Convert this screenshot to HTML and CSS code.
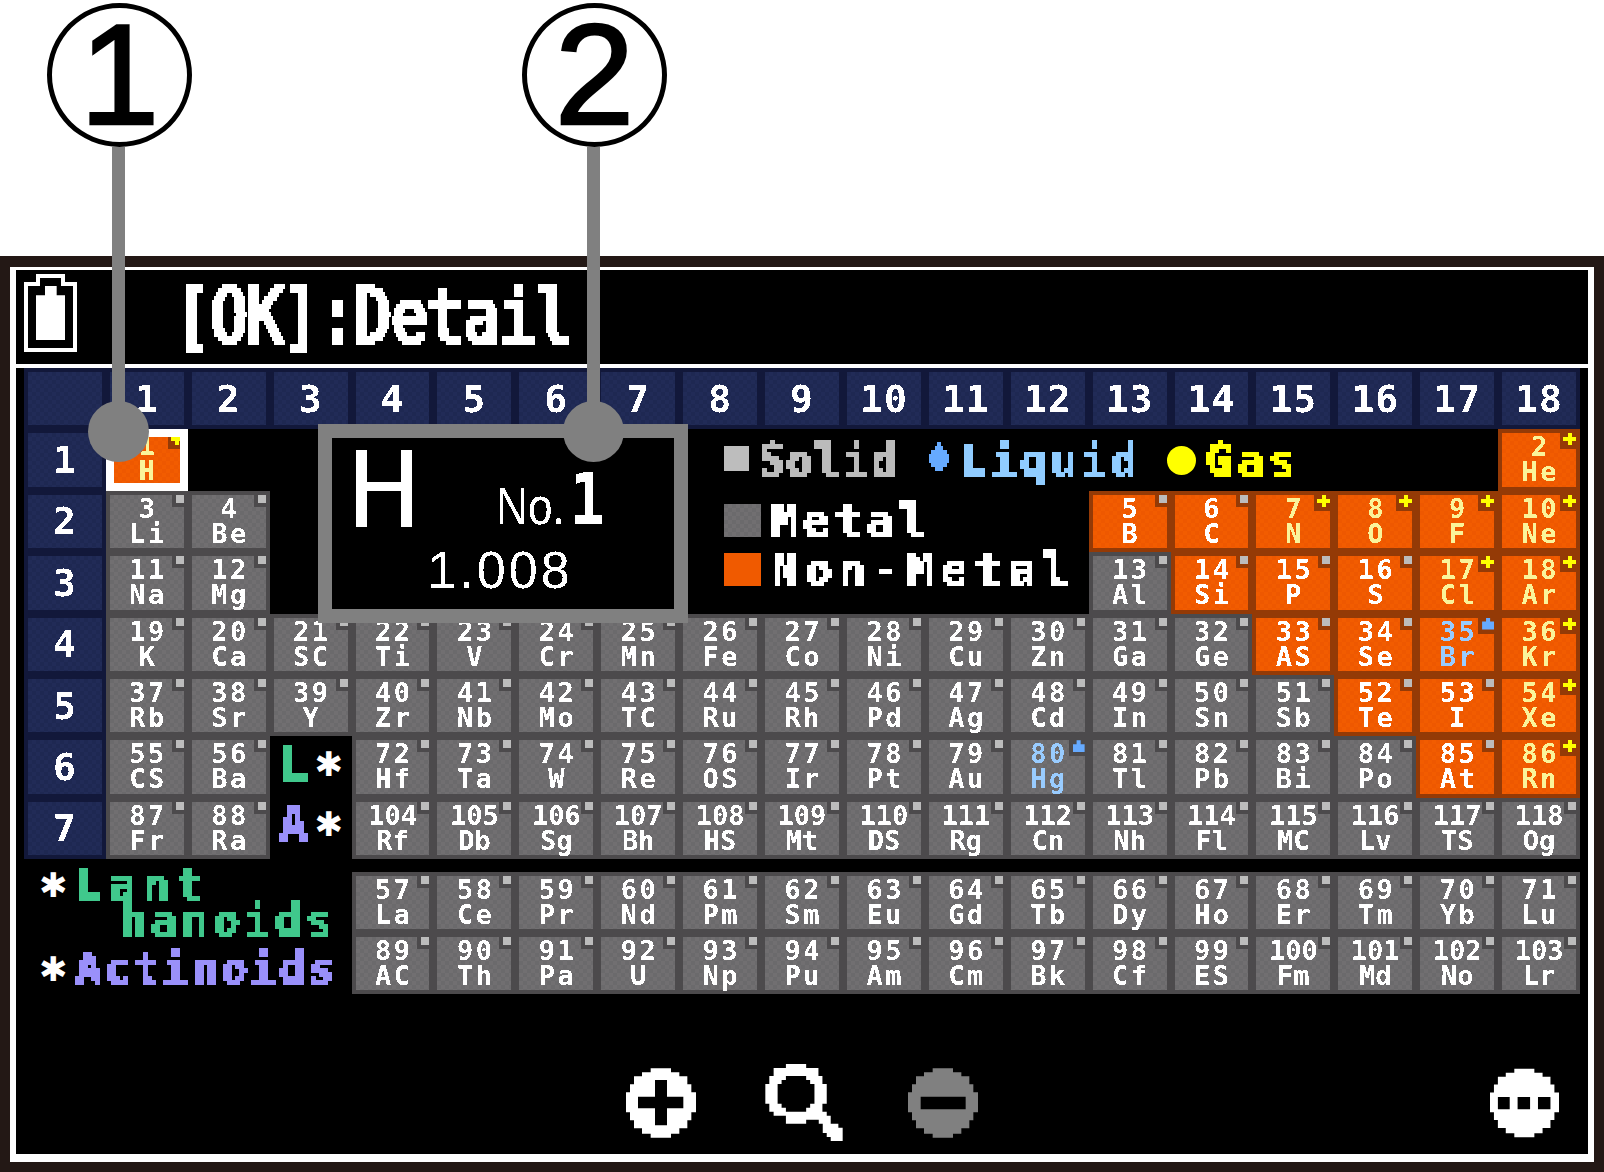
FILE: index.html
```html
<!DOCTYPE html>
<html lang="en">
<head>
<meta charset="utf-8">
<title>Periodic table</title>
<link rel="stylesheet" href="styles.css">
</head>
<body>
<svg class="defs" width="0" height="0" aria-hidden="true"><defs>
  <filter id="px" x="-10%" y="-30%" width="120%" height="160%" color-interpolation-filters="sRGB">
    <feFlood x="2" y="2" width="1" height="1" flood-color="#000"/>
    <feComposite width="4" height="4"/>
    <feTile result="grid"/>
    <feComposite in="SourceGraphic" in2="grid" operator="in"/>
    <feMorphology operator="dilate" radius="2"/>
    <feComponentTransfer><feFuncA type="discrete" tableValues="0 1 1 1"/></feComponentTransfer>
  </filter>
  <filter id="crisp" x="-10%" y="-30%" width="120%" height="160%" color-interpolation-filters="sRGB">
    <feComponentTransfer><feFuncA type="discrete" tableValues="0 1"/></feComponentTransfer>
  </filter>
</defs></svg>
<div class="callouts">
  <div class="callout one"><div class="bubble">1</div><div class="stem"></div><div class="dot"></div></div>
  <div class="callout two"><div class="bubble">2</div><div class="stem"></div><div class="dot"></div></div>
</div>
<div class="device">
<div class="screen">
  <header class="bar">
    <svg class="battery" viewBox="12 6 159 234"><path fill="#fff" fill-rule="evenodd" d="M48 6h87v24h36v210H12V30h36zM60 18v24H24v186h135V42h-36V18z"/><path fill="#fff" d="M75 42h35v28h25v134H48V70h27z"/></svg>
    <div class="prompt">[OK]:Detail</div>
  </header>
  <main class="table">
    <div class="hd"></div><div class="hd"><span>1</span></div><div class="hd"><span>2</span></div><div class="hd"><span>3</span></div><div class="hd"><span>4</span></div><div class="hd"><span>5</span></div><div class="hd"><span>6</span></div><div class="hd"><span>7</span></div><div class="hd"><span>8</span></div><div class="hd"><span>9</span></div><div class="hd"><span>10</span></div><div class="hd"><span>11</span></div><div class="hd"><span>12</span></div><div class="hd"><span>13</span></div><div class="hd"><span>14</span></div><div class="hd"><span>15</span></div><div class="hd"><span>16</span></div><div class="hd"><span>17</span></div><div class="hd"><span>18</span></div>

    <div class="key state">
      <span class="sq solid"></span><span class="lbl solid-t">Solid</span>
      <svg class="drop" viewBox="0 0 20 29"><path fill="#66aaff" d="M8 0h4v4h2v4h4v4h2v9h-2v4h-4v4H6v-4H2v-4H0v-9h2V8h4V4h2z"/></svg><span class="lbl liquid-t">Liquid</span>
      <span class="ball"></span><span class="lbl gas-t">Gas</span>
    </div>
    <div class="key kinds">
      <div class="kind"><span class="sw metal"></span><span class="lbl wide">Metal</span></div>
      <div class="kind"><span class="sw non"></span><span class="lbl wider">Non-Metal</span></div>
    </div>

    <div class="hd"><span>1</span></div><div class="el n g sel"><i></i><b>1</b><b>H</b></div><div class="el n g c19"><i></i><b>2</b><b>He</b></div>
    <div class="hd"><span>2</span></div><div class="el m"><i></i><b>3</b><b>Li</b></div><div class="el m"><i></i><b>4</b><b>Be</b></div><div class="el n c14"><i></i><b>5</b><b>B</b></div><div class="el n"><i></i><b>6</b><b>C</b></div><div class="el n g"><i></i><b>7</b><b>N</b></div><div class="el n g"><i></i><b>8</b><b>O</b></div><div class="el n g"><i></i><b>9</b><b>F</b></div><div class="el n g"><i></i><b>10</b><b>Ne</b></div>
    <div class="hd"><span>3</span></div><div class="el m"><i></i><b>11</b><b>Na</b></div><div class="el m"><i></i><b>12</b><b>Mg</b></div><div class="el m c14"><i></i><b>13</b><b>Al</b></div><div class="el n"><i></i><b>14</b><b>Si</b></div><div class="el n"><i></i><b>15</b><b>P</b></div><div class="el n"><i></i><b>16</b><b>S</b></div><div class="el n g"><i></i><b>17</b><b>Cl</b></div><div class="el n g"><i></i><b>18</b><b>Ar</b></div>
    <div class="hd"><span>4</span></div><div class="el m"><i></i><b>19</b><b>K</b></div><div class="el m"><i></i><b>20</b><b>Ca</b></div><div class="el m"><i></i><b>21</b><b>SC</b></div><div class="el m"><i></i><b>22</b><b>Ti</b></div><div class="el m"><i></i><b>23</b><b>V</b></div><div class="el m"><i></i><b>24</b><b>Cr</b></div><div class="el m"><i></i><b>25</b><b>Mn</b></div><div class="el m"><i></i><b>26</b><b>Fe</b></div><div class="el m"><i></i><b>27</b><b>Co</b></div><div class="el m"><i></i><b>28</b><b>Ni</b></div><div class="el m"><i></i><b>29</b><b>Cu</b></div><div class="el m"><i></i><b>30</b><b>Zn</b></div><div class="el m"><i></i><b>31</b><b>Ga</b></div><div class="el m"><i></i><b>32</b><b>Ge</b></div><div class="el n"><i></i><b>33</b><b>AS</b></div><div class="el n"><i></i><b>34</b><b>Se</b></div><div class="el n l"><i></i><b>35</b><b>Br</b></div><div class="el n g"><i></i><b>36</b><b>Kr</b></div>
    <div class="hd"><span>5</span></div><div class="el m"><i></i><b>37</b><b>Rb</b></div><div class="el m"><i></i><b>38</b><b>Sr</b></div><div class="el m"><i></i><b>39</b><b>Y</b></div><div class="el m"><i></i><b>40</b><b>Zr</b></div><div class="el m"><i></i><b>41</b><b>Nb</b></div><div class="el m"><i></i><b>42</b><b>Mo</b></div><div class="el m"><i></i><b>43</b><b>TC</b></div><div class="el m"><i></i><b>44</b><b>Ru</b></div><div class="el m"><i></i><b>45</b><b>Rh</b></div><div class="el m"><i></i><b>46</b><b>Pd</b></div><div class="el m"><i></i><b>47</b><b>Ag</b></div><div class="el m"><i></i><b>48</b><b>Cd</b></div><div class="el m"><i></i><b>49</b><b>In</b></div><div class="el m"><i></i><b>50</b><b>Sn</b></div><div class="el m"><i></i><b>51</b><b>Sb</b></div><div class="el n"><i></i><b>52</b><b>Te</b></div><div class="el n"><i></i><b>53</b><b>I</b></div><div class="el n g"><i></i><b>54</b><b>Xe</b></div>
    <div class="hd"><span>6</span></div><div class="el m"><i></i><b>55</b><b>CS</b></div><div class="el m"><i></i><b>56</b><b>Ba</b></div>
    <div class="series"><div class="ser"><span class="big lan">L</span><span class="star">✱</span></div><div class="ser"><span class="big act">A</span><span class="star">✱</span></div></div>
    <div class="el m"><i></i><b>72</b><b>Hf</b></div><div class="el m"><i></i><b>73</b><b>Ta</b></div><div class="el m"><i></i><b>74</b><b>W</b></div><div class="el m"><i></i><b>75</b><b>Re</b></div><div class="el m"><i></i><b>76</b><b>OS</b></div><div class="el m"><i></i><b>77</b><b>Ir</b></div><div class="el m"><i></i><b>78</b><b>Pt</b></div><div class="el m"><i></i><b>79</b><b>Au</b></div><div class="el m l"><i></i><b>80</b><b>Hg</b></div><div class="el m"><i></i><b>81</b><b>Tl</b></div><div class="el m"><i></i><b>82</b><b>Pb</b></div><div class="el m"><i></i><b>83</b><b>Bi</b></div><div class="el m"><i></i><b>84</b><b>Po</b></div><div class="el n"><i></i><b>85</b><b>At</b></div><div class="el n g"><i></i><b>86</b><b>Rn</b></div>
    <div class="hd"><span>7</span></div><div class="el m"><i></i><b>87</b><b>Fr</b></div><div class="el m"><i></i><b>88</b><b>Ra</b></div><div class="el m t c5"><i></i><b>104</b><b>Rf</b></div><div class="el m t"><i></i><b>105</b><b>Db</b></div><div class="el m t"><i></i><b>106</b><b>Sg</b></div><div class="el m t"><i></i><b>107</b><b>Bh</b></div><div class="el m t"><i></i><b>108</b><b>HS</b></div><div class="el m t"><i></i><b>109</b><b>Mt</b></div><div class="el m t"><i></i><b>110</b><b>DS</b></div><div class="el m t"><i></i><b>111</b><b>Rg</b></div><div class="el m t"><i></i><b>112</b><b>Cn</b></div><div class="el m t"><i></i><b>113</b><b>Nh</b></div><div class="el m t"><i></i><b>114</b><b>Fl</b></div><div class="el m t"><i></i><b>115</b><b>MC</b></div><div class="el m t"><i></i><b>116</b><b>Lv</b></div><div class="el m t"><i></i><b>117</b><b>TS</b></div><div class="el m t"><i></i><b>118</b><b>Og</b></div>

    <section class="detail">
      <div class="d-top"><span class="d-sym">H</span><span class="d-no">No.</span><span class="d-num">1</span></div>
      <div class="d-mass">1.008</div>
    </section>
  </main>
  <section class="table lower">
    <div class="names">
      <span class="star">✱</span><span class="lbl lan sp-a">Lant</span>
      <span></span><span class="lbl lan right sp-b">hanoids</span>
      <span class="star gap">✱</span><span class="lbl act gap sp-c">Actinoids</span>
    </div>
    <div class="el m"><i></i><b>57</b><b>La</b></div><div class="el m"><i></i><b>58</b><b>Ce</b></div><div class="el m"><i></i><b>59</b><b>Pr</b></div><div class="el m"><i></i><b>60</b><b>Nd</b></div><div class="el m"><i></i><b>61</b><b>Pm</b></div><div class="el m"><i></i><b>62</b><b>Sm</b></div><div class="el m"><i></i><b>63</b><b>Eu</b></div><div class="el m"><i></i><b>64</b><b>Gd</b></div><div class="el m"><i></i><b>65</b><b>Tb</b></div><div class="el m"><i></i><b>66</b><b>Dy</b></div><div class="el m"><i></i><b>67</b><b>Ho</b></div><div class="el m"><i></i><b>68</b><b>Er</b></div><div class="el m"><i></i><b>69</b><b>Tm</b></div><div class="el m"><i></i><b>70</b><b>Yb</b></div><div class="el m"><i></i><b>71</b><b>Lu</b></div>
    <div class="el m"><i></i><b>89</b><b>AC</b></div><div class="el m"><i></i><b>90</b><b>Th</b></div><div class="el m"><i></i><b>91</b><b>Pa</b></div><div class="el m"><i></i><b>92</b><b>U</b></div><div class="el m"><i></i><b>93</b><b>Np</b></div><div class="el m"><i></i><b>94</b><b>Pu</b></div><div class="el m"><i></i><b>95</b><b>Am</b></div><div class="el m"><i></i><b>96</b><b>Cm</b></div><div class="el m"><i></i><b>97</b><b>Bk</b></div><div class="el m"><i></i><b>98</b><b>Cf</b></div><div class="el m"><i></i><b>99</b><b>ES</b></div><div class="el m t"><i></i><b>100</b><b>Fm</b></div><div class="el m t"><i></i><b>101</b><b>Md</b></div><div class="el m t"><i></i><b>102</b><b>No</b></div><div class="el m t"><i></i><b>103</b><b>Lr</b></div>
  </section>
  <footer class="tools">
    <svg class="ic plus" viewBox="18 40 210 208"><path fill="#fff" fill-rule="evenodd" d="M92 40h61v12h25v12h24v24h12v24h14v60h-14v24h-12v24h-24v16h-25v12H92v-12H66v-16H42v-24H30v-24H18v-60h12V88h12V64h24V52h26zM105 75v50H54v35h51v51h36v-51h49v-35h-49V75z"/></svg>
    <svg class="ic mag" viewBox="435 28 233 232"><path fill="#fff" fill-rule="evenodd" d="M497 28H558V40H595V64H607V88H620V148H607V172H620V184H632V208H655V220H668V260H632V248H620V236H608V208H596V196H558V208H497V184H460V172H447V148H435V88H447V64H460V40H497ZM497 64V76H484V88H472V148H484V160H497V172H558V160H570V148H583V88H570V76H558V64Z"/></svg>
    <svg class="ic minus" viewBox="18 40 210 208"><path fill="#808080" fill-rule="evenodd" d="M92 40h61v12h25v12h24v24h12v24h14v60h-14v24h-12v24h-24v16h-25v12H92v-12H66v-16H42v-24H30v-24H18v-60h12V88h12V64h24V52h26zM56 125v38h135v-38z"/></svg>
    <svg class="ic more" viewBox="18 40 210 208"><path fill="#fff" fill-rule="evenodd" d="M92 40h61v12h25v12h24v24h12v24h14v60h-14v24h-12v24h-24v16h-25v12H92v-12H66v-16H42v-24H30v-24H18v-60h12V88h12V64h24V52h26zM42 126v37h36v-37zM102 126v37h38v-37zM164 126v37h38v-37z"/></svg>
  </footer>
</div>
</div>
</body>
</html>
```
FILE: styles.css
```css
* { box-sizing: border-box; }
html, body { margin: 0; background: #fff; }
body { width: 1604px; height: 1172px; overflow: hidden; position: relative; font-family: "DejaVu Sans Mono", monospace; }
.defs { position: absolute; }

.callouts { height: 256px; }
.callout { position: absolute; top: 0; left: 0; z-index: 5; }
.one { left: 47px; }
.two { left: 522px; }
.bubble {
  position: absolute; top: 3px; left: 0; width: 145px; height: 144px;
  border: 5px solid #000; border-radius: 50%; background: #fff; color: #000;
  font: 143px/134px "Liberation Sans", sans-serif; text-align: center; -webkit-text-stroke: 2.5px #000;
}
.stem { position: absolute; top: 147px; left: 65px; width: 13px; height: 270px; background: #808080; }
.dot { position: absolute; top: 401px; left: 41px; width: 61px; height: 61px; border-radius: 50%; background: #808080; }

.device { height: 916px; border: 10px solid #231815; border-top-width: 11px; }
.screen { height: 895px; background: #000; color: #fff; border: 6px solid #fff; border-top-width: 3px; border-bottom-width: 8px; }

.bar { height: 98px; border-bottom: 4px solid #fff; display: flex; align-items: flex-start; padding: 4px 0 0 8px; }
.battery { width: 53px; height: 78px; flex: none; }
.prompt {
  margin: 2px 0 0 93px; padding: 0 6px; font-size: 74px; line-height: 80px; -webkit-text-stroke: 1.5px #fff;
  transform: scaleX(.81); transform-origin: 0 0; white-space: nowrap; filter: url(#px);
}

.table {
  position: relative; margin: 0 8px; display: grid;
  grid-template-columns: repeat(19, 1fr); grid-template-rows: repeat(8, 1fr); height: 491px;
}
.c5 { grid-column: 5; }
.c14 { grid-column: 14; }
.c19 { grid-column: 19; }

.hd {
  display: flex; align-items: center; justify-content: center;
  border: 4px solid #12183a;
  background: repeating-conic-gradient(#212b57 0 25%, #1e2852 0 50%) 0 0 / 8px 8px;
  font-size: 38px; font-weight: 700; color: #fff; letter-spacing: 1px;
}
.hd span { filter: url(#crisp); }

.el {
  position: relative; display: flex; flex-direction: column; align-items: center;
  border: 4px solid; padding-top: 1px; font-size: 27px; line-height: 25px; letter-spacing: 2.5px; color: #fff;
}
.el b { display: block; padding-left: 2.5px; white-space: nowrap; filter: url(#crisp); }
.el.t { letter-spacing: 0; }
.el.t b { padding-left: 0; }
.m { border-color: #4c4a4c; background: repeating-conic-gradient(#716f71 0 25%, #6b6a6c 0 50%) 0 0 / 8px 8px; }
.n { border-color: #943a06; background: repeating-conic-gradient(#f25c00 0 25%, #ee5800 0 50%) 0 0 / 8px 8px; }
.el.g { color: #faf49a; }
.el.l { color: #99ccff; }
.el.sel { border: 8px solid #fff; padding-top: 0; overflow: hidden; }
.sel b { margin-top: -4px; margin-bottom: 4px; }

.el i { position: absolute; top: 0; right: 0; width: 12px; height: 12px; }
.m i { background: #4c4a4c; }
.n i { background: #943a06; }
.el i::after { content: ""; position: absolute; top: 0; right: 0; width: 8px; height: 8px; background: #bcbcbc; }
.el.g i, .el.l i { width: 16px; height: 16px; }
.el.g i::after {
  width: 13px; height: 12px;
  background: linear-gradient(#ff0, #ff0) center / 4px 100% no-repeat, linear-gradient(#ff0, #ff0) center / 100% 4px no-repeat;
}
.el.l i::after { width: 12px; height: 12px; background: #66aaff; clip-path: polygon(33% 0, 67% 0, 67% 33%, 100% 33%, 100% 100%, 0 100%, 0 33%, 33% 33%); }
.sel i { top: -4px; right: -4px; }

.lbl { font-size: 44px; line-height: 34px; font-weight: 700; letter-spacing: 1.7px; white-space: nowrap; filter: url(#px); }
.key { display: flex; align-items: center; }
.state { grid-row: 2; grid-column: 9 / 19; padding: 16px 0 0 45px; align-items: flex-start; }
.state .lbl { margin-top: -1px; }
.sq { width: 25px; height: 25px; margin: 1px 9px 0 0; }
.solid { background: #bdbdbd; }
.solid-t { color: #bbb; }
.drop { width: 20px; height: 29px; margin: -3px 11px 0 30px; flex: none; }
.liquid-t { color: #90ccff; letter-spacing: 3.6px; }
.ball { width: 29px; height: 29px; border-radius: 50%; background: #ff0; margin: 1px 10px 0 26px; }
.gas-t { color: #ff0; letter-spacing: 5px; }
.kinds { grid-row: 3 / 5; grid-column: 9 / 14; flex-direction: column; align-items: flex-start; padding: 13px 0 0 45px; gap: 15px; }
.kind { display: flex; align-items: center; }
.sw { width: 37px; height: 33px; margin-right: 10px; }
.metal { background: repeating-conic-gradient(#716f71 0 25%, #6b6a6c 0 50%) 0 0 / 8px 8px; }
.non { background: #f05a00; }
.wide { letter-spacing: 5.5px; }
.wider { letter-spacing: 7.4px; }

.series { grid-row: 7 / 9; grid-column: 4; background: #000; display: flex; flex-direction: column; padding: 9px 0 0 9px; gap: 22px; }
.ser { display: flex; align-items: center; height: 38px; gap: 3px; }
.big { font-size: 48px; line-height: 38px; font-weight: 700; filter: url(#px); padding: 0 4px 0 0; }
.lan { color: #40c88c; }
.act { color: #9a90fa; }
.star { font-family: "DejaVu Sans", sans-serif; font-size: 34px; line-height: 30px; color: #fff; }
.sp-a { letter-spacing: 7.5px; }
.sp-b { letter-spacing: 4.5px; }
.sp-c { letter-spacing: 2.7px; }

.detail {
  position: absolute; left: 294px; top: 56px; width: 370px; height: 199px; z-index: 2;
  background: #000; border: 14px solid #808080; color: #fff;
  padding: 0 0 0 18px;
}
.d-top { display: flex; align-items: baseline; height: 94px; padding-top: 4px; }
.d-sym { font: 108px/90px "Liberation Sans", sans-serif; -webkit-text-stroke: 1px #fff; transform: scaleX(.88); transform-origin: 0 100%; filter: url(#px); width: 78px; }
.d-no { font: 52px/52px "Liberation Sans", sans-serif; margin-left: 68px; transform: scaleX(.85); transform-origin: 0 100%; width: 74px; filter: url(#crisp); }
.d-num { font-size: 72px; font-weight: 700; line-height: 72px; transform: scaleX(.8); transform-origin: 0 100%; filter: url(#crisp); }
.d-mass { font: 52px/48px "Liberation Sans", sans-serif; letter-spacing: 3px; text-align: center; padding: 14px 6px 0 0; margin-left: -18px; filter: url(#crisp); }

.lower { height: 122px; margin-top: 13px; grid-template-rows: repeat(2, 1fr); }
.names {
  grid-row: 1 / 3; grid-column: 1 / 5; display: grid; grid-template-columns: 36px 262px; justify-content: start; align-content: start;
  padding: 0 0 0 15px; margin-top: -4px; row-gap: 2px; align-items: center;
}
.right { text-align: right; }
.gap { margin-top: 12px; }

.tools { height: 160px; display: flex; align-items: flex-start; padding: 70px 29px 0 610px; }
.ic { flex: none; width: 70px; height: 70px; margin-top: 4px; }
.mag { width: 78px; height: 77px; margin: 0 65px 0 69px; }
.more { width: 69px; margin-left: auto; }
```
